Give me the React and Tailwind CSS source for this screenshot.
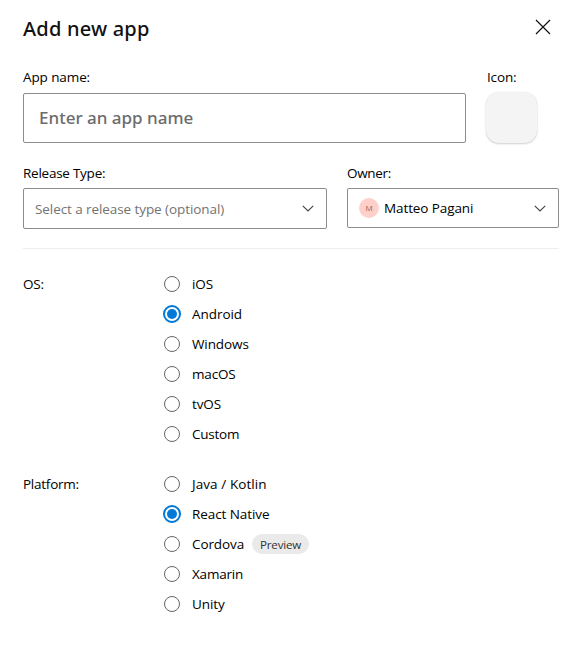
const Chevron = () => (
  <svg className="h-[7px] w-3 shrink-0" viewBox="0 0 12 7" fill="none">
    <path d="M0.8 0.8L6 6L11.2 0.8" stroke="#444" strokeWidth="1.15" />
  </svg>
);

const osOptions = [
  { label: "iOS", text: "tracking-[-0.1px]" },
  { label: "Android", text: "tracking-[-0.05px]", checked: true },
  { label: "Windows", text: "tracking-[-0.1px]" },
  { label: "macOS", text: "tracking-[-0.15px]" },
  { label: "tvOS", text: "tracking-[-0.1px]" },
  { label: "Custom", text: "tracking-[-0.25px]" },
];

const platformOptions = [
  { label: "Java / Kotlin", text: "tracking-[0.08px]" },
  { label: "React Native", text: "tracking-[-0.08px]", checked: true },
  { label: "Cordova", text: "tracking-[-0.1px]", badge: "Preview" },
  { label: "Xamarin", text: "tracking-[-0.2px]" },
  { label: "Unity", text: "tracking-[-0.1px]" },
];

function Radio({ checked }) {
  return (
    <span className="flex w-[18px] shrink-0 items-center justify-center">
      {checked ? (
        <span className="flex size-[18px] items-center justify-center rounded-full border-2 border-[#0078d7]">
          <span className="size-[10px] rounded-full bg-[#0078d7]" />
        </span>
      ) : (
        <span className="size-4 rounded-full border border-[#666]" />
      )}
    </span>
  );
}

function RadioGroup({ title, options }) {
  return (
    <div className="flex">
      <div className="w-[140px] leading-[30px] tracking-[-0.25px]">
        <span>{title}</span>
      </div>
      <div className="flex flex-col">
        {options.map((o) => (
          <label key={o.label} className="flex h-[30px] items-center">
            <Radio checked={o.checked} />
            <span className={"ml-[11px] " + o.text}>{o.label}</span>
            {o.badge && (
              <span className="ml-2 flex h-5 w-[57px] items-center justify-center rounded-full bg-[#eaeaea] pt-px text-[11.6px] tracking-[-0.2px] text-[#333]">
                {o.badge}
              </span>
            )}
          </label>
        ))}
      </div>
    </div>
  );
}

export default function App() {
  return (
    <div className="h-[658px] w-[579px] bg-white pl-[23px] pr-5 pt-[13px] font-['Open_Sans','Noto_Sans',sans-serif] text-[13.5px] leading-5 text-black">
      <header className="flex h-8 items-start justify-between">
        <h1 className="font-['Noto_Sans','Open_Sans',sans-serif] text-[20px] font-medium leading-8 tracking-[0.2px] text-[#111]">Add new app</h1>
        <svg className="mr-2 mt-1.5 size-4" viewBox="0 0 16 16" fill="none">
          <path d="M1 1L15 15M15 1L1 15" stroke="#111" strokeWidth="1.2" />
        </svg>
      </header>

      <div className="mt-[22px] flex">
        <div className="w-[443px]">
          <div className="h-[26px] tracking-[-0.1px]">App name:</div>
          <div className="flex h-[50px] items-center rounded-xs border border-[#8c8c8c] pl-[15px] font-['Noto_Sans','Open_Sans',sans-serif] text-[17px] font-medium text-[#6c6c6c]">
            <span>Enter an app name</span>
          </div>
        </div>
        <div className="ml-5">
          <div className="ml-px h-[25px] tracking-[-0.15px]">Icon:</div>
          <div className="size-[50.5px] rounded-[13px] bg-[#f4f4f4] shadow-[0_0_1px_rgba(0,0,0,0.12),0_1px_2px_rgba(0,0,0,0.18)]" />
        </div>
      </div>

      <div className="mt-5 flex gap-5">
        <div className="w-[304px]">
          <div className="h-[25px] tracking-[-0.25px]">Release Type:</div>
          <div className="flex h-[41px] items-center justify-between rounded-xs border border-[#8c8c8c] pl-[11px] pr-[12px] text-[#737373]">
            <span className="tracking-[-0.08px]">Select a release type (optional)</span>
            <Chevron />
          </div>
        </div>
        <div className="w-[212px]">
          <div className="h-[25px] tracking-[-0.3px]">Owner:</div>
          <div className="flex h-10 items-center rounded-xs border border-[#8c8c8c] pl-[11px] pr-[12px]">
            <span className="flex size-5 items-center justify-center rounded-full bg-[#ffd0c9] text-[8px] text-[#a5604f]">
              M
            </span>
            <span className="ml-[5px] flex-1 tracking-[-0.1px]">Matteo Pagani</span>
            <Chevron />
          </div>
        </div>
      </div>

      <div className="mb-5 mt-[19px] h-px bg-[#eee]" />

      <div className="flex flex-col gap-5">
        <RadioGroup title="OS:" options={osOptions} />
        <RadioGroup title="Platform:" options={platformOptions} />
      </div>
    </div>
  );
}
